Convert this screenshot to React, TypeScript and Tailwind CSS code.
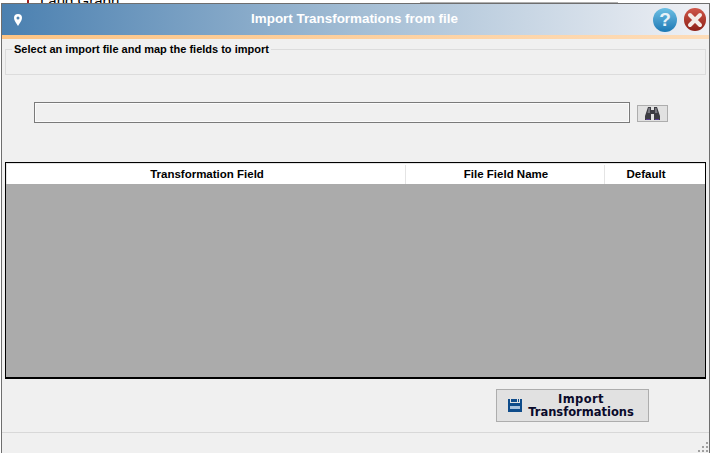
import React from 'react';

const BinocularsIcon = () => (
  <svg width="15" height="13" viewBox="0 0 15 13">
    <path d="M3 0h3v3h3V0h3l1 3 2 6v4H9V7H6v6H0V9l2-6z" fill="#3c3c42" />
    <path d="M3.500 1h1.500v5H2.500zM10 1h1.500l1 5H10z" fill="#77777e" />
    <path d="M1 12h4v1H1zM10 12h4v1h-4z" fill="#5a3f94" />
  </svg>
);

const SaveIcon = () => (
  <svg width="14" height="13" viewBox="0 0 14 13">
    <path d="M0 0h2v4h10V0h2v13H0z" fill="#0f4c8a" />
    <path d="M3 0h6v3H3zM10 0h1v3h-1z" fill="#0f4c8a" />
    <path d="M2 7h10v3H2z" fill="#a9c3de" />
  </svg>
);

const PinIcon = () => (
  <svg width="8" height="12" viewBox="0 0 8 12">
    <path fillRule="evenodd" d="M4 0a4 4 0 0 1 4 4c0 2.500-2.500 5.500-4 8-1.500-2.500-4-5.500-4-8a4 4 0 0 1 4-4zm0 2.500a1.500 1.500 0 1 0 0 3 1.500 1.500 0 0 0 0-3z" fill="#fff" />
  </svg>
);

const HelpButton = () => (
  <div className="w-[24px] h-[24px] rounded-full bg-gradient-to-b from-[#6cc0e4] to-[#1a78b4] flex items-center justify-center text-[#e8f2f8] font-bold text-[19px] leading-none font-['Liberation_Sans',sans-serif]">
    ?
  </div>
);

const CloseButton = () => (
  <div className="w-[22px] h-[23px] rounded-full bg-gradient-to-b from-[#d0574a] to-[#8e1f16] flex items-center justify-center">
    <svg width="16" height="16" viewBox="0 0 16 16">
      <path d="M3 3l10 10M13 3L3 13" stroke="#f4ece8" strokeWidth="4" strokeLinecap="round" />
    </svg>
  </div>
);

const App: React.FC = () => {
  return (
    <div className="w-[710px] h-[453px] bg-white overflow-hidden flex flex-col font-['Liberation_Sans',sans-serif]">
      {/* window behind the dialog */}
      <div className="h-[3px] overflow-hidden flex items-end pl-[27px] pr-[92px] justify-between">
        <div className="flex items-end gap-[5px]">
          <div className="w-[2px] h-[3px] bg-[#a02020]" />
          <span className="relative top-[-1px] text-[15px] leading-[3px] text-black pl-[6px]">Land Grabh</span>
        </div>
        <div className="w-[198px] h-px bg-[#b0b0b0]" />
      </div>

      <div className="flex-1 flex flex-col ml-px border border-b-0 border-[#6e6e6e] bg-[#f0f0f0]">
        <div className="h-[31px] shrink-0 flex items-center pl-[12px] pr-[3px] bg-gradient-to-r from-[#4a80b0] via-[#a3bdd4] to-[#f0f1f5]">
          <PinIcon />
          <div className="flex-1 text-center text-white font-bold text-[13.4px] pl-[34px]">
            Import Transformations from file
          </div>
          <div className="flex items-center gap-[7px]">
            <HelpButton />
            <CloseButton />
          </div>
        </div>
        <div className="h-[4px] shrink-0 bg-gradient-to-r from-[#fdc484] to-[#fddcb8]" />

        <div className="flex-1 flex flex-col pl-[3px]">
          <div className="mt-[10px] w-[701px] h-[26px] border border-[#dcdcdc] relative">
            <span className="absolute left-[6px] -top-[8px] bg-[#f0f0f0] px-[2px] text-[11px] leading-[14px] font-bold text-black">
              Select an import file and map the fields to import
            </span>
          </div>

          <div className="mt-[27px] flex items-start pl-[29px]">
            <div className="w-[596px] h-[21px] border border-[#7a7a7a] bg-[#f0f0f0] shadow-[inset_0_0_0_1px_#fafafa]" />
            <div className="ml-[7px] mt-[3px] w-[31px] h-[17px] border border-[#adadad] bg-[#e1e1e1] flex items-center justify-center">
              <BinocularsIcon />
            </div>
          </div>

          <div className="mt-[39px] h-[217px] w-[701px] border border-b-2 border-black bg-[#ababab] flex flex-col">
            <div className="h-[21px] pt-px bg-white border-t border-l border-[#e4e4e4] flex text-[11.5px] font-bold text-black">
              <div className="w-[399px] border-r border-[#e4e4e4] flex items-center justify-center pl-[2px]">Transformation Field</div>
              <div className="w-[199px] border-r border-[#e4e4e4] flex items-center justify-center pl-[2px]">File Field Name</div>
              <div className="flex-1 flex items-center justify-center pr-[18px]">Default</div>
            </div>
          </div>

          <div className="mt-[10px] ml-[491px] w-[153px] h-[33px] border border-[#adadad] bg-[#e1e1e1] flex items-center pl-[11px] pr-[8px]">
            <SaveIcon />
            <div className="flex-1 text-center text-[11.5px] leading-[13px] font-bold text-[#0a0a2a] font-['DejaVu_Sans',sans-serif]">
              <span className="tracking-[0.4px]">Import</span>
              <br />
              Transformations
            </div>
          </div>

          <div className="mt-[10px] -ml-[3px] flex-1 border-t border-[#d8d8d8] flex items-end justify-end pr-px pb-px">
            <div className="grid grid-cols-3 gap-[2px]">
              <span />
              <span />
              <span className="w-[2px] h-[2px] bg-[#a0a0a0]" />
              <span />
              <span className="w-[2px] h-[2px] bg-[#a0a0a0]" />
              <span className="w-[2px] h-[2px] bg-[#a0a0a0]" />
              <span className="w-[2px] h-[2px] bg-[#a0a0a0]" />
              <span className="w-[2px] h-[2px] bg-[#a0a0a0]" />
              <span className="w-[2px] h-[2px] bg-[#a0a0a0]" />
            </div>
          </div>
        </div>
      </div>
    </div>
  );
};

export default App;
